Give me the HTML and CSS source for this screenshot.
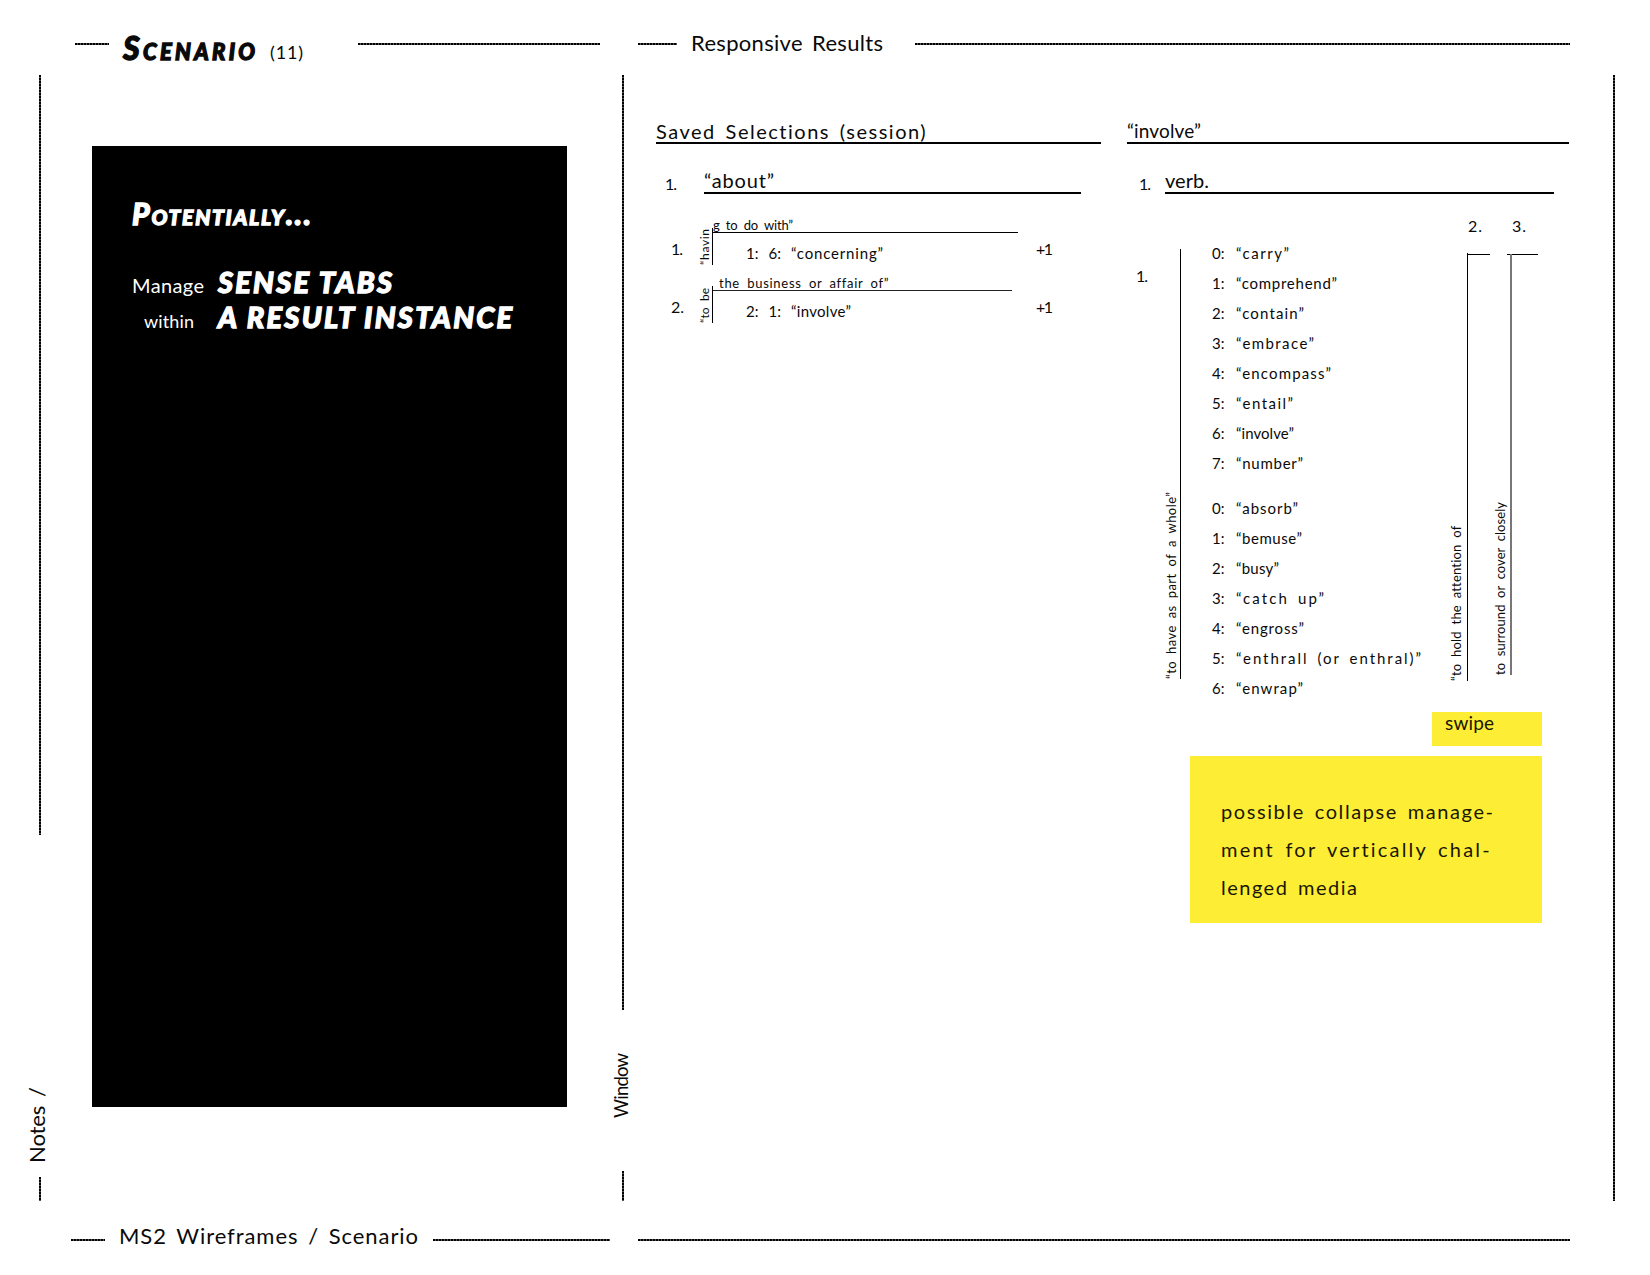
FILE: index.html
```html
<!DOCTYPE html>
<html lang="en">
<head>
<meta charset="utf-8">
<title>MS2 Wireframes / Scenario</title>
<link rel="stylesheet" href="styles.css">
</head>
<body>
<div class="page">
  <header class="band band-top">
    <i class="rule rule-stub"></i>
    <h1 class="marker title"><span data-w="132">Scenario</span></h1>
    <span class="count"><span data-w="33">(11)</span></span>
    <i class="rule rule-left"></i>
    <i class="rule rule-lead"></i>
    <span class="caption"><span data-w="192">Responsive Results</span></span>
    <i class="rule rule-right"></i>
  </header>

  <main class="middle">
    <div class="rail rail-notes">
      <i class="vrule vrule-notes"></i>
      <span class="rail-label"><span data-w="76">Notes /</span></span>
      <i class="vrule vrule-end"></i>
    </div>

    <section class="panel">
      <h2 class="marker potentially"><span data-w="179">Potentially...</span></h2>
      <p class="goal"><span class="lead"><span data-w="72">Manage</span></span><b class="marker"><span data-w="174">SENSE TABS</span></b></p>
      <p class="goal"><span class="lead lead-in"><span data-w="50">within</span></span><b class="marker"><span data-w="294">A RESULT INSTANCE</span></b></p>
    </section>

    <div class="rail rail-window">
      <i class="vrule vrule-window"></i>
      <span class="rail-label"><span data-w="65">Window</span></span>
      <i class="vrule vrule-window-end"></i>
    </div>

    <section class="saved">
      <h2 class="heading"><span data-w="270">Saved Selections (session)</span></h2>
      <div class="entry">
        <span class="num"><span data-w="12">1.</span></span>
        <span class="word"><span data-w="70">“about”</span></span>
      </div>
      <div class="selection">
        <span class="num"><span data-w="12">1.</span></span>
        <span class="fold"><span data-w="36">“havin</span></span>
        <div class="body">
          <div class="sense"><span data-w="80">g to do with”</span></div>
          <div class="result"><span class="ref">1:</span><span class="ref">6:</span><span data-w="92">“concerning”</span></div>
        </div>
        <span class="plus"><span data-w="17">+1</span></span>
      </div>
      <div class="selection selection-second">
        <span class="num"><span data-w="13">2.</span></span>
        <span class="fold"><span data-w="35">“to be</span></span>
        <div class="body">
          <div class="sense"><span data-w="169">the business or affair of”</span></div>
          <div class="result"><span class="ref">2:</span><span class="ref">1:</span><span data-w="60">“involve”</span></div>
        </div>
        <span class="plus"><span data-w="17">+1</span></span>
      </div>
    </section>

    <section class="lookup">
      <h2 class="heading"><span data-w="74">“involve”</span></h2>
      <div class="entry">
        <span class="num"><span data-w="12">1.</span></span>
        <span class="word"><span data-w="44">verb.</span></span>
      </div>
      <div class="senses">
        <span class="num"><span data-w="12">1.</span></span>
        <span class="spine"><span data-w="187">“to have as part of a whole”</span></span>
        <div class="lists">
          <ul>
            <li><span class="idx">0:</span><span data-w="53">“carry”</span></li>
            <li><span class="idx">1:</span><span data-w="101">“comprehend”</span></li>
            <li><span class="idx">2:</span><span data-w="68">“contain”</span></li>
            <li><span class="idx">3:</span><span data-w="78">“embrace”</span></li>
            <li><span class="idx">4:</span><span data-w="95">“encompass”</span></li>
            <li><span class="idx">5:</span><span data-w="57">“entail”</span></li>
            <li><span class="idx">6:</span><span data-w="58">“involve”</span></li>
            <li><span class="idx">7:</span><span data-w="67">“number”</span></li>
          </ul>
          <ul>
            <li><span class="idx">0:</span><span data-w="62">“absorb”</span></li>
            <li><span class="idx">1:</span><span data-w="66">“bemuse”</span></li>
            <li><span class="idx">2:</span><span data-w="43">“busy”</span></li>
            <li><span class="idx">3:</span><span data-w="88">“catch up”</span></li>
            <li><span class="idx">4:</span><span data-w="68">“engross”</span></li>
            <li><span class="idx">5:</span><span data-w="185">“enthrall (or enthral)”</span></li>
            <li><span class="idx">6:</span><span data-w="67">“enwrap”</span></li>
          </ul>
        </div>
        <div class="tab">
          <span class="num"><span data-w="14">2.</span></span>
          <span class="spine"><span data-w="155">“to hold the attention of</span></span>
          <i class="cap"></i>
        </div>
        <div class="tab tab-third">
          <span class="num"><span data-w="14">3.</span></span>
          <span class="spine"><span data-w="173">to surround or cover closely</span></span>
          <i class="cap"></i>
        </div>
      </div>
      <div class="sticky sticky-swipe"><span data-w="49">swipe</span></div>
      <div class="sticky sticky-note">
        <div><span data-w="272">possible collapse manage-</span></div>
        <div><span data-w="269">ment for vertically chal-</span></div>
        <div><span data-w="136">lenged media</span></div>
      </div>
    </section>

    <div class="rail rail-edge"><i class="vrule vrule-edge"></i></div>
  </main>

  <footer class="band band-bottom">
    <i class="rule rule-foot-stub"></i>
    <span class="caption foot-caption"><span data-w="299">MS2 Wireframes / Scenario</span></span>
    <i class="rule rule-foot-left"></i>
    <i class="rule rule-foot-right"></i>
  </footer>
</div>
<script src="tracking.js"></script>
</body>
</html>
```
FILE: styles.css
```css
* { box-sizing: border-box; margin: 0; padding: 0; }

body {
  width: 1650px;
  height: 1275px;
  overflow: hidden;
  background: #fff;
  color: #0a0a0a;
  font-family: Lato, "Noto Sans", sans-serif;
  font-weight: 400;
  word-spacing: 0.2em;
}

span, b { white-space: nowrap; }
[data-w] { display: inline-block; }
ul { list-style: none; }
i { display: block; flex: none; }

.page { display: flex; flex-direction: column; height: 1275px; }

.marker {
  font-weight: 900;
  font-style: italic;
  word-spacing: 0;
  -webkit-text-stroke: 1.3px currentColor;
}

/* hand-drawn rules */
.rule {
  height: 2px;
  background: repeating-linear-gradient(90deg, #000 0 2px, #555 2px 3px);
}
.vrule {
  width: 2px;
  background: repeating-linear-gradient(#000 0 2px, #555 2px 3px);
}

/* top and bottom bands */
.band { display: flex; align-items: center; }
.band-top { height: 75px; padding: 12px 0 0 75px; }
.rule-stub { width: 34px; }
.rule-left { width: 242px; }
.rule-lead { width: 39px; margin-left: 38px; }
.rule-right { width: 655px; }
.title {
  width: 147px;
  margin-left: 14px;
  padding-top: 8px;
  font-size: 32px;
  font-variant: small-caps;
  line-height: 32px;
}
.count { width: 88px; padding-top: 16px; font-size: 18px; line-height: 20px; }
.caption { width: 224px; margin-left: 14px; padding-bottom: 2px; font-size: 22px; line-height: 24px; }

.band-bottom { height: 74px; padding: 3px 0 0 71px; }
.rule-foot-stub { width: 34px; }
.foot-caption { width: 314px; font-size: 22px; padding-bottom: 7px; }
.rule-foot-left { width: 177px; }
.rule-foot-right { width: 932px; margin-left: 28px; }

.middle { display: flex; align-items: flex-start; height: 1126px; }

/* vertical rails */
.rail {
  display: flex;
  flex-direction: column;
  align-items: center;
  flex: none;
  width: 40px;
  height: 1126px;
}
.rail-notes { margin-left: 20px; }
.rail-window { margin-left: 36px; }
.rail-edge { margin-left: 25px; }
.rail-label {
  writing-mode: vertical-rl;
  transform: rotate(180deg);
  margin-right: 6px;
  font-size: 22px;
  line-height: 24px;
}
.vrule-notes { height: 760px; }
.rail-notes .rail-label { height: 78px; margin-top: 250px; }
.vrule-end { height: 24px; margin-top: auto; }
.vrule-window { height: 935px; }
.rail-window .rail-label { height: 67px; margin-top: 41px; margin-right: 4px; font-size: 18.5px; }
.vrule-window-end { height: 30px; margin-top: auto; }
.vrule-edge { height: 1126px; }

/* scenario panel */
.panel {
  flex: none;
  width: 475px;
  height: 961px;
  margin: 71px 0 0 32px;
  padding: 50px 40px;
  background: #000;
  color: #fff;
}
.potentially { font-size: 30px; font-variant: small-caps; line-height: 34px; margin-bottom: 34px; }
.goal { display: flex; align-items: baseline; height: 35px; font-size: 20px; line-height: 35px; }
.goal .lead { width: 86px; }
.goal .lead-in { padding-left: 12px; font-size: 18px; }
.goal .marker { font-size: 29px; }

/* columns of results */
.saved { flex: none; width: 445px; margin-left: 13px; }
.lookup { flex: none; width: 442px; margin-left: 26px; }
.heading {
  height: 69px;
  padding-top: 46px;
  border-bottom: 2px solid #000;
  font-size: 20px;
  font-weight: 400;
  line-height: 20px;
}
.lookup .heading { font-size: 19px; }
.entry { display: flex; height: 50px; margin-right: 20px; }
.num, .plus { flex: none; font-size: 16px; line-height: 20px; }
.entry .num { width: 48px; padding: 30px 0 0 9px; }
.entry .word {
  flex: 1;
  padding-top: 26px;
  border-bottom: 2px solid #000;
  font-size: 20px;
  line-height: 20px;
}

.selection { display: flex; align-items: flex-start; height: 58px; padding: 0 0 0 15px; }
.entry + .selection { margin-top: 22px; }
.selection .num { width: 27px; padding-top: 23px; }
.fold {
  flex: none;
  width: 15px;
  height: 37px;
  margin-top: 12px;
  border-left: 1px solid #000;
  writing-mode: vertical-rl;
  transform: rotate(180deg);
  font-size: 12px;
  line-height: 14px;
}
.body { flex: none; width: 305px; }
.sense { height: 17px; border-bottom: 1px solid #000; font-size: 13px; line-height: 18px; }
.selection-second .sense { width: 299px; padding-left: 6px; border-bottom-color: #222; }
.result { display: flex; padding: 10px 0 0 33px; font-size: 15px; line-height: 20px; }
.ref { width: 22.5px; }
.plus { margin-left: 18px; padding-top: 23px; }

/* looked-up word with its senses */
.lookup .entry { margin-right: 15px; }
.lookup .entry .num { width: 38px; padding-left: 12px; }
.senses { display: flex; align-items: flex-start; height: 508px; padding-left: 9px; }
.senses > .num { width: 29px; padding-top: 72px; }
.spine {
  width: 16px;
  height: 430px;
  border-left: 1px solid #000;
  writing-mode: vertical-rl;
  transform: rotate(180deg);
  font-size: 13px;
  line-height: 13px;
}
.senses > .spine { flex: none; margin-top: 55px; }
.lists { flex: none; width: 238px; margin-left: 31px; padding-top: 44px; }
.lists ul + ul { margin-top: 14px; }
.lists li { display: flex; height: 30.07px; font-size: 15px; line-height: 30px; }
.idx { width: 24px; }
.tab {
  display: grid;
  flex: none;
  grid-template: 59px 428px / 18px 26px;
  justify-items: start;
}
.tab .num { grid-column: 2; padding-top: 22px; }
.tab .spine { grid-column: 1; grid-row: 2; width: 18px; height: 428px; }
.tab .cap { grid-column: 2; grid-row: 2; width: 22px; height: 1px; margin-top: 1px; background: #000; }
.tab-third .spine { height: 421px; margin-top: 1px; border-left: 2px solid #777; }
.tab-third .cap { width: 31px; margin-left: -5px; }

/* sticky notes */
.sticky { margin-left: auto; margin-right: 27px; background: #fdee35; color: #1a1600; }
.sticky-swipe {
  width: 110px;
  height: 34px;
  margin-top: 10px;
  padding: 1px 13px;
  font-size: 19px;
  line-height: 20px;
}
.sticky-note {
  width: 352px;
  height: 167px;
  margin-top: 10px;
  padding: 36px 31px;
  font-size: 20px;
  line-height: 38px;
}
```
FILE: tracking.js
```js
// Spreads the letters of each label evenly over its data-w length.
document.querySelectorAll('[data-w]').forEach(function (el) {
  var vertical = getComputedStyle(el).writingMode !== 'horizontal-tb';
  var box = el.getBoundingClientRect();
  var natural = vertical ? box.height : box.width;
  var gaps = el.textContent.length - 1;
  el.style.letterSpacing = (el.dataset.w - natural) / gaps + 'px';
});
```
